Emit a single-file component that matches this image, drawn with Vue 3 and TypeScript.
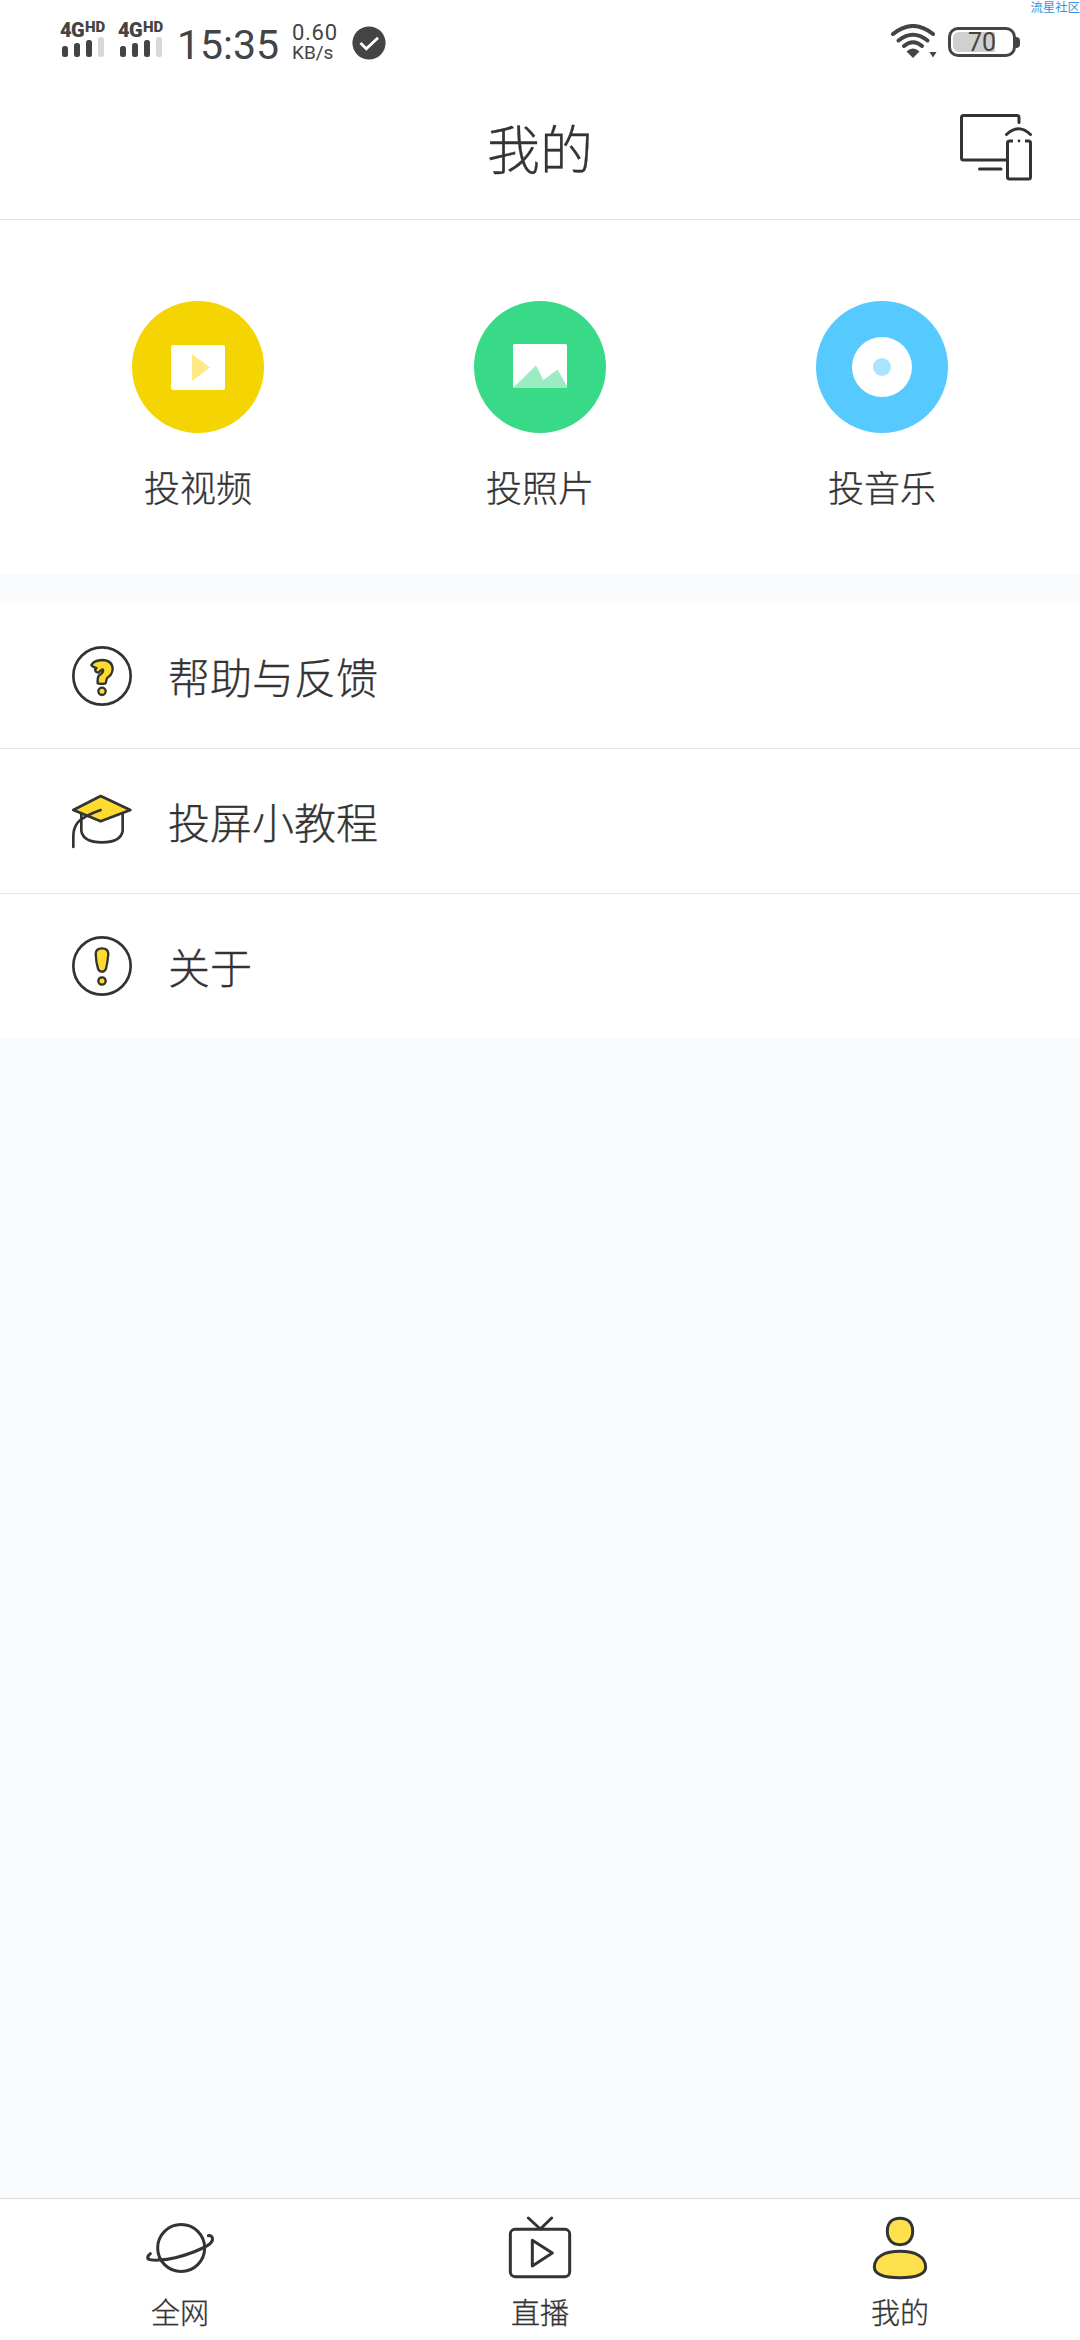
<script setup lang="ts">
interface Item {
  id: string
  label: string
}

const casts: Item[] = [
  { id: 'video', label: '投视频' },
  { id: 'photo', label: '投照片' },
  { id: 'music', label: '投音乐' },
]

const rows: Item[] = [
  { id: 'help', label: '帮助与反馈' },
  { id: 'guide', label: '投屏小教程' },
  { id: 'about', label: '关于' },
]

const tabs: Item[] = [
  { id: 'web', label: '全网' },
  { id: 'live', label: '直播' },
  { id: 'mine', label: '我的' },
]
</script>

<template>
  <div class="screen">
    <span class="watermark">流星社区</span>

    <header class="status">
      <div v-for="n in 2" :key="n" class="sim">
        <div class="net"><span class="gen">4G</span><span class="hd">HD</span></div>
        <svg class="bars" width="44" height="20" viewBox="0 0 44 20">
          <rect x="0" y="9" width="6" height="11" rx="2.5" fill="#444" />
          <rect x="12" y="6" width="6" height="14" rx="2.5" fill="#444" />
          <rect x="24" y="3" width="6" height="17" rx="2.5" fill="#444" />
          <rect x="36" y="0" width="6" height="20" rx="2.5" fill="#d8d8d8" />
        </svg>
      </div>
      <span class="clock">15:35</span>
      <div class="speed"><span class="rate">0.60</span><span class="unit">KB/s</span></div>
      <svg class="tick" width="34" height="34" viewBox="0 0 34 34">
        <circle cx="17" cy="17" r="16.6" fill="#444" />
        <path d="M8.5 17l5.8 5.8L26 11.7" fill="none" stroke="#fff" stroke-width="2.8" />
      </svg>
      <svg class="wifi" width="48" height="36" viewBox="0 0 48 36" fill="none" stroke="#444" stroke-width="4" stroke-linecap="round">
        <path d="M3 10Q23 -6 43 10" />
        <path d="M8.5 16.5Q23 5 37.500 16.500" />
        <path d="M14 22Q23 14.500 32 22" />
        <path d="M16.500 27.500Q23 21.500 29.500 27.500L23 34Z" fill="#444" stroke="none" />
        <path d="M39.500 28h7l-3.500 5.500Z" fill="#444" stroke="none" />
      </svg>
      <div class="battery"><div class="charge"></div><span class="percent">70</span></div>
      <i class="nub"></i>
    </header>

    <div class="title-bar">
      <h1>我的</h1>
      <svg class="devices" width="74" height="68" viewBox="0 0 74 68" fill="none" stroke="#333" stroke-width="3" stroke-linecap="round" stroke-linejoin="round">
        <path d="M59 8.500V3.500Q59 1.500 57 1.500H3.500Q1.500 1.500 1.500 3.500V44Q1.500 46 3.500 46H46" />
        <path d="M19.500 55H41" />
        <path d="M46.500 20.500Q58.500 9 70.500 20.500" />
        <path d="M53 27H49.500Q47.500 27 47.500 29V63Q47.500 65 49.500 65H68.500Q70.500 65 70.500 63V29Q70.500 27 68.500 27H65" stroke-linecap="butt" />
        <circle cx="59" cy="27" r="1.400" fill="#333" stroke="none" />
      </svg>
    </div>

    <section class="casts">
      <div v-for="c in casts" :key="c.id" class="cast">
        <svg v-if="c.id === 'video'" width="132" height="132" viewBox="0 0 132 132">
          <circle cx="66" cy="66" r="66" fill="#f5d403" />
          <rect x="39" y="44" width="54" height="45" rx="2" fill="#fff" />
          <path d="M60 53L78 66.500L60 80Z" fill="#fee984" />
        </svg>
        <svg v-else-if="c.id === 'photo'" width="132" height="132" viewBox="0 0 132 132">
          <circle cx="66" cy="66" r="66" fill="#38d987" />
          <rect x="39" y="43" width="54" height="44" rx="2" fill="#fff" />
          <path d="M40 86L62 64.500L69.500 79L83.500 68.500L93 85Q93 87 91 87H41Z" fill="#9becc3" />
        </svg>
        <svg v-else width="132" height="132" viewBox="0 0 132 132">
          <circle cx="66" cy="66" r="66" fill="#56c9ff" />
          <circle cx="66" cy="66" r="30" fill="#fff" />
          <circle cx="66" cy="66" r="9" fill="#aae4ff" />
        </svg>
        <span>{{ c.label }}</span>
      </div>
    </section>

    <section class="list">
      <div v-for="r in rows" :key="r.id" class="row">
        <svg width="60" height="60" viewBox="0 0 180 180" fill="none" stroke="#333" stroke-width="8" stroke-linecap="round" stroke-linejoin="round">
          <template v-if="r.id === 'help'">
            <circle cx="90" cy="90" r="86" />
            <path d="M58 57Q66 43 90 42Q122 43 122 70Q120 87 106 95Q103 100 101 112Q89 115 77 112Q76 96 80 89Q96 79 93 71Q90 68 79 80Q71 79 69 71L74 66Q60 62 58 57Z" fill="#fedb2e" stroke-width="7" />
            <circle cx="90" cy="136" r="11" fill="#fedb2e" stroke-width="7" />
          </template>
          <template v-else-if="r.id === 'guide'">
            <path d="M28 68V120Q34 154 90 154Q146 154 152 120V68" />
            <path d="M86 15L175 57L86 91L4 57Z" fill="#fedb2e" />
            <path d="M86 57Q32 76 16 96Q4 112 4 136V168" />
          </template>
          <template v-else>
            <circle cx="90" cy="90" r="86" />
            <path d="M71 54Q71 37 90 37Q109 37 109 54Q107 78 102 98Q98 107 90 107Q82 107 78 98Q72 78 71 54Z" fill="#fedb2e" stroke-width="7" />
            <circle cx="90" cy="135" r="11" fill="#fedb2e" stroke-width="7" />
          </template>
        </svg>
        <span>{{ r.label }}</span>
      </div>
    </section>

    <nav class="tabs">
      <div v-for="t in tabs" :key="t.id" class="tab">
        <svg width="72" height="72" viewBox="72 96 216 216" fill="none" stroke="#333" stroke-width="9" stroke-linecap="round" stroke-linejoin="round">
          <template v-if="t.id === 'web'">
            <circle cx="183.500" cy="204" r="70.500" />
            <path d="M91 221Q81 227 84 237C96 243 132 241 166 233C205 224 250 206 268 193Q282 180 276 171Q272 166 265 167" />
          </template>
          <template v-else-if="t.id === 'live'">
            <rect x="91" y="148" width="178" height="142" rx="14" />
            <path d="M145 114L181 147L215 114" />
            <path d="M157 181L217 219L157 258Z" />
          </template>
          <template v-else>
            <path d="M142 154C142 127 158 115 180 115C202 115 218 127 218 154C218 180 202 194 180 194C158 194 142 180 142 154Z" fill="#ffe14d" />
            <path d="M103 261C104 230 134 214 180 214C226 214 256 230 257 261C257 284 226 293 180 293C134 293 103 284 103 261Z" fill="#ffe14d" />
          </template>
        </svg>
        <span>{{ t.label }}</span>
      </div>
    </nav>
  </div>
</template>

<style>
body {
  margin: 0;
  background: #fafbfd;
}
</style>

<style scoped>
.screen {
  position: relative;
  display: flex;
  flex-direction: column;
  width: 1080px;
  height: 2340px;
  overflow: hidden;
  background: #fafbfd;
  color: #333;
  font-family: 'Noto Sans CJK SC', sans-serif;
  font-weight: 300;
  -webkit-text-stroke: 0.3px currentColor;
}

.watermark {
  position: absolute;
  top: 0;
  right: 0;
  font-size: 12.400px;
  line-height: 14px;
  font-weight: 400;
  white-space: nowrap;
  color: #3d8fdd;
  -webkit-text-stroke: 0;
}

.status {
  display: flex;
  align-items: flex-start;
  box-sizing: border-box;
  height: 84px;
  padding-left: 60px;
  background: #fff;
  color: #444;
  font-family: Roboto, sans-serif;
  font-weight: 400;
  -webkit-text-stroke: 0;
}

.sim {
  width: 58px;
  padding-top: 20px;
}

.net {
  display: flex;
  height: 18px;
  font-weight: 900;
  white-space: nowrap;
}

.gen {
  width: 25px;
  font-size: 20px;
  line-height: 20px;
  letter-spacing: -0.6px;
}

.hd {
  font-size: 15px;
  line-height: 14px;
}

.bars {
  display: block;
  margin: -1px 0 0 2px;
}

.clock {
  width: 116px;
  box-sizing: border-box;
  padding: 21px 0 0 1px;
  font-size: 41px;
  line-height: 48px;
}

.speed {
  display: flex;
  flex-direction: column;
  width: 60px;
  padding-top: 23px;
}

.rate {
  font-size: 22px;
  line-height: 20px;
  letter-spacing: 0.7px;
}

.unit {
  font-size: 19px;
  line-height: 20px;
}

.tick {
  margin-top: 26px;
}

.wifi {
  margin: 24px 10px 0 auto;
}

.battery {
  position: relative;
  box-sizing: border-box;
  width: 68px;
  height: 30px;
  margin-top: 27px;
  border: 3px solid #444;
  border-radius: 10px;
  text-align: center;
}

.charge {
  position: absolute;
  top: 2px;
  left: 2px;
  width: 42px;
  height: 20px;
  border-radius: 6px 0 0 6px;
  background: #d0d0d0;
}

.percent {
  position: relative;
  display: block;
  font-size: 25px;
  line-height: 26px;
}

.nub {
  width: 4px;
  height: 11px;
  margin: 37px 60px 0 0;
  border-radius: 0 4px 4px 0;
  background: #444;
}

.title-bar {
  display: flex;
  align-items: flex-start;
  box-sizing: border-box;
  height: 136px;
  padding: 0 46px 0 120px;
  border-bottom: 1px solid #e2e2e2;
  background: #fff;
}

h1 {
  flex: 1;
  margin: 23px 0 0;
  font-size: 53px;
  line-height: 80px;
  font-weight: 300;
  text-align: center;
}

.devices {
  margin-top: 30px;
}

.casts {
  display: flex;
  justify-content: space-between;
  box-sizing: border-box;
  height: 354px;
  padding: 81px 132px 0;
  background: #fff;
}

.cast {
  display: flex;
  flex-direction: column;
  align-items: center;
}

.cast span {
  margin-top: 26px;
  font-size: 36px;
  line-height: 54px;
}

.list {
  margin-top: 30px;
  background: #fff;
}

.row {
  display: flex;
  align-items: center;
  height: 144px;
  padding-left: 72px;
  border-bottom: 1px solid #e5e5e5;
}

.row:last-child {
  border-bottom: 0;
}

.row span {
  margin-left: 36px;
  font-size: 42px;
  line-height: 60px;
}

.tabs {
  display: flex;
  box-sizing: border-box;
  height: 142px;
  margin-top: auto;
  border-top: 1px solid #dcdcdc;
  background: #fff;
}

.tab {
  display: flex;
  flex: 1;
  flex-direction: column;
  align-items: center;
  padding-top: 13px;
}

.tab span {
  margin-top: 5px;
  font-size: 29px;
  line-height: 44px;
}
</style>
